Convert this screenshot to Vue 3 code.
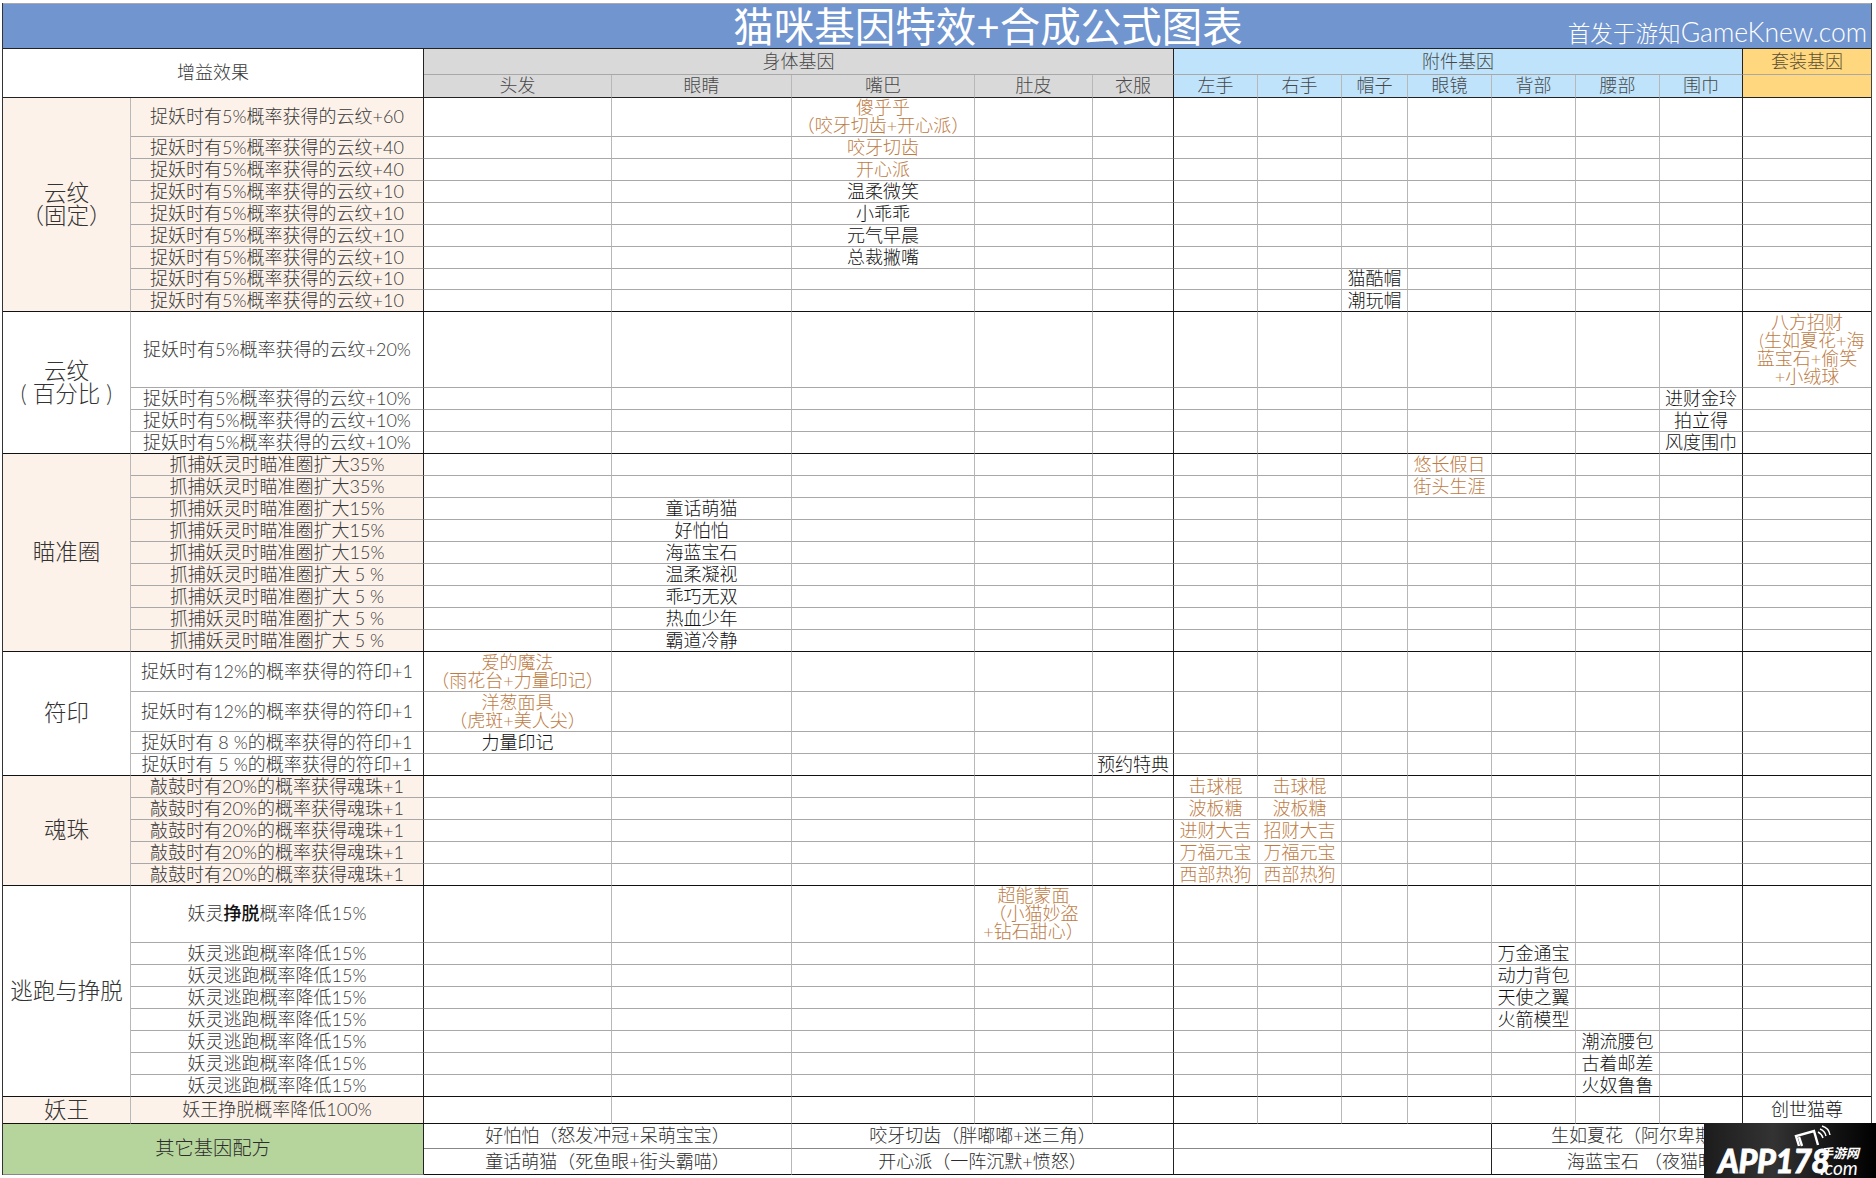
<template>
  <div class="page">
    <table class="sheet">
      <colgroup>
        <col v-for="(w, i) in colWidths" :key="i" :style="{ width: w + 'px' }" />
      </colgroup>
      <thead>
        <tr class="title-row">
          <th colspan="15" class="title-cell">
            <div class="title-inner">
              <span class="title">猫咪基因特效+合成公式图表</span>
              <span class="credit">首发于游知<span class="domain">GameKnew.com</span></span>
            </div>
          </th>
        </tr>
        <tr class="head-top">
          <th colspan="2" rowspan="2" class="buff-head">增益效果</th>
          <th colspan="5" class="body-gene dark-r">身体基因</th>
          <th colspan="7" class="part-gene dark-r">附件基因</th>
          <th class="suit-gene">套装基因</th>
        </tr>
        <tr class="head-sub">
          <th v-for="(c, i) in bodyCols" :key="c" class="body-gene" :class="{ 'dark-r': i === 4 }">{{ c }}</th>
          <th v-for="(c, i) in partCols" :key="c" class="part-gene" :class="{ 'dark-r': i === 6 }">{{ c }}</th>
          <th class="suit-gene"></th>
        </tr>
      </thead>
      <tbody>
        <template v-for="group in groups" :key="group.name">
          <tr v-for="(row, r) in group.rows" :key="r" :style="{ height: row.h + 'px' }">
            <td v-if="r === 0" :rowspan="group.rows.length" class="group-name end" :class="{ peach: group.peach }">{{ group.name }}</td>
            <td class="effect dark-r" :class="{ peach: group.peach, end: r === group.rows.length - 1 }">
              <template v-if="Array.isArray(row.effect)">{{ row.effect[0] }}<b>{{ row.effect[1] }}</b>{{ row.effect[2] }}</template>
              <template v-else>{{ row.effect }}</template>
            </td>
            <td
              v-for="(key, k) in colKeys"
              :key="key"
              class="gene"
              :class="{
                'dark-r': k === 4 || k === 11,
                end: r === group.rows.length - 1,
                orange: row.orange,
              }"
            >{{ row[key] }}</td>
          </tr>
        </template>
        <tr class="recipe-row first">
          <td colspan="2" rowspan="2" class="recipe-head">其它基因配方</td>
          <td colspan="2">好怕怕（怒发冲冠+呆萌宝宝）</td>
          <td colspan="3" class="dark-r">咬牙切齿（胖嘟嘟+迷三角）</td>
          <td colspan="4" class="dark-r"></td>
          <td colspan="4" class="cut-off first-off">生如夏花（阿尔卑斯</td>
        </tr>
        <tr class="recipe-row second">
          <td colspan="2">童话萌猫（死鱼眼+街头霸喵）</td>
          <td colspan="3" class="dark-r">开心派（一阵沉默+愤怒）</td>
          <td colspan="4" class="dark-r"></td>
          <td colspan="4" class="cut-off second-off">海蓝宝石 （夜猫眼</td>
        </tr>
      </tbody>
    </table>

    <div class="watermark">
      <svg class="wm-icon" viewBox="0 0 44 30" fill="none" stroke="#fff">
        <path d="M5 21 L2 11 L20 6 L24 20" stroke-width="2.4" />
        <path d="M5 12 L8 21" stroke-width="2.4" />
        <path d="M24 7 Q28 9 29 13" stroke-width="1.4" />
        <path d="M26 4 Q31 6 32 11" stroke-width="1.4" />
        <path d="M28 1 Q35 3 36 10" stroke-width="1.4" />
      </svg>
      <span class="wm-text">APP178</span>
      <span class="wm-side"><span class="wm-cn">手游网</span><span class="wm-com">.com</span></span>
    </div>
  </div>
</template>

<script setup>
const colWidths = [128, 293, 188, 180, 183, 118, 81, 84, 84, 66, 84, 84, 84, 83, 128]
const bodyCols = ['头发', '眼睛', '嘴巴', '肚皮', '衣服']
const partCols = ['左手', '右手', '帽子', '眼镜', '背部', '腰部', '围巾']
const colKeys = ['hair', 'eye', 'mouth', 'belly', 'clothes', 'left', 'right', 'hat', 'glasses', 'back', 'waist', 'scarf', 'suit']

const fixedCloud = '捉妖时有5%概率获得的云纹+'
const aim = '抓捕妖灵时瞄准圈扩大'
const charm = '敲鼓时有20%的概率获得魂珠+1'
const flee = '妖灵逃跑概率降低15%'

const groups = [
  {
    name: '云纹\n（固定）',
    peach: true,
    rows: [
      { h: 39, effect: fixedCloud + '60', mouth: '傻乎乎\n（咬牙切齿+开心派）', orange: true },
      { h: 22, effect: fixedCloud + '40', mouth: '咬牙切齿', orange: true },
      { h: 22, effect: fixedCloud + '40', mouth: '开心派', orange: true },
      { h: 22, effect: fixedCloud + '10', mouth: '温柔微笑' },
      { h: 22, effect: fixedCloud + '10', mouth: '小乖乖' },
      { h: 22, effect: fixedCloud + '10', mouth: '元气早晨' },
      { h: 22, effect: fixedCloud + '10', mouth: '总裁撇嘴' },
      { h: 21, effect: fixedCloud + '10', hat: '猫酷帽' },
      { h: 22, effect: fixedCloud + '10', hat: '潮玩帽' },
    ],
  },
  {
    name: '云纹\n( 百分比 )',
    rows: [
      { h: 76, effect: fixedCloud + '20%', suit: '八方招财\n\u00a0\u00a0(生如夏花+海\n蓝宝石+偷笑\n+小绒球', orange: true },
      { h: 22, effect: fixedCloud + '10%', scarf: '进财金玲' },
      { h: 22, effect: fixedCloud + '10%', scarf: '拍立得' },
      { h: 22, effect: fixedCloud + '10%', scarf: '风度围巾' },
    ],
  },
  {
    name: '瞄准圈',
    peach: true,
    rows: [
      { h: 22, effect: aim + '35%', glasses: '悠长假日', orange: true },
      { h: 22, effect: aim + '35%', glasses: '街头生涯', orange: true },
      { h: 22, effect: aim + '15%', eye: '童话萌猫' },
      { h: 22, effect: aim + '15%', eye: '好怕怕' },
      { h: 22, effect: aim + '15%', eye: '海蓝宝石' },
      { h: 22, effect: aim + ' 5 %', eye: '温柔凝视' },
      { h: 22, effect: aim + ' 5 %', eye: '乖巧无双' },
      { h: 22, effect: aim + ' 5 %', eye: '热血少年' },
      { h: 22, effect: aim + ' 5 %', eye: '霸道冷静' },
    ],
  },
  {
    name: '符印',
    rows: [
      { h: 40, effect: '捉妖时有12%的概率获得的符印+1', hair: '爱的魔法\n（雨花台+力量印记）', orange: true },
      { h: 40, effect: '捉妖时有12%的概率获得的符印+1', hair: '洋葱面具\n（虎斑+美人尖）', orange: true },
      { h: 22, effect: '捉妖时有 8 %的概率获得的符印+1', hair: '力量印记' },
      { h: 22, effect: '捉妖时有 5 %的概率获得的符印+1', clothes: '预约特典' },
    ],
  },
  {
    name: '魂珠',
    peach: true,
    rows: [
      { h: 22, effect: charm, left: '击球棍', right: '击球棍', orange: true },
      { h: 22, effect: charm, left: '波板糖', right: '波板糖', orange: true },
      { h: 22, effect: charm, left: '进财大吉', right: '招财大吉', orange: true },
      { h: 22, effect: charm, left: '万福元宝', right: '万福元宝', orange: true },
      { h: 22, effect: charm, left: '西部热狗', right: '西部热狗', orange: true },
    ],
  },
  {
    name: '逃跑与挣脱',
    rows: [
      { h: 57, effect: ['妖灵', '挣脱', '概率降低15%'], belly: '超能蒙面\n（小猫妙盗\n+钻石甜心）', orange: true },
      { h: 22, effect: flee, back: '万金通宝' },
      { h: 22, effect: flee, back: '动力背包' },
      { h: 22, effect: flee, back: '天使之翼' },
      { h: 22, effect: flee, back: '火箭模型' },
      { h: 22, effect: flee, waist: '潮流腰包' },
      { h: 22, effect: flee, waist: '古着邮差' },
      { h: 22, effect: flee, waist: '火奴鲁鲁' },
    ],
  },
  {
    name: '妖王',
    peach: true,
    rows: [{ h: 27, effect: '妖王挣脱概率降低100%', suit: '创世猫尊' }],
  },
]
</script>

<style>
html, body { background: #fff; }
</style>

<style scoped>
.page {
  position: relative;
  width: 1876px;
  height: 1178px;
  overflow: hidden;
  padding: 3px 0 0 2px;
  box-sizing: border-box;
  background: #fff;
  font-family: Lato, "Noto Sans CJK SC", sans-serif;
}
.sheet {
  width: 1870px;
  table-layout: fixed;
  border-collapse: separate;
  border-spacing: 0;
  border-left: 1px solid #333;
  border-right: 1px solid #444;
  font-size: 18px;
  font-weight: 300;
  line-height: 18px;
  color: #383838;
}
th, td {
  box-sizing: border-box;
  padding: 0 0 2px;
  text-align: center;
  font-weight: 300;
  white-space: pre-line;
  border-right: 1px solid #b8b8b8;
  border-bottom: 1px solid #a8a8a8;
}
.title-row { height: 46px; }
.title-cell {
  background: #7195cf;
  border-top: 1px solid #aaa;
  border-right: 0;
  border-bottom: 1px solid #222;
  padding: 0;
  color: #fff;
}
.title-inner {
  position: relative;
  display: flex;
  justify-content: center;
  align-items: center;
  height: 44px;
}
.title { font-size: 40.5px; line-height: 44px; margin: 2px 0 0 102px; font-weight: 400; }
.credit {
  position: absolute;
  right: 4px;
  top: 14px;
  font-size: 22.6px;
  line-height: 28px;
  white-space: nowrap;
}
.domain { font-size: 26.5px; }
.head-top { height: 26px; }
.head-sub { height: 23px; }
.head-sub th { border-bottom: 1px solid #222; }
.buff-head { background: #fff; border-bottom: 1px solid #222; border-right: 1px solid #222; }
.body-gene { background: #d9d9d9; color: #484848; }
.part-gene { background: #bee3fb; color: #484848; }
.suit-gene { background: #ffd77f; color: #5c5032; border-right: 0; }
.group-name { font-size: 22.5px; line-height: 23px; color: #333; }
.peach { background: #fdf2ea; }
.gene { color: #111; }
.gene.orange { color: #bd7c45; }
.dark-r { border-right: 1px solid #222; }
.end { border-bottom: 1px solid #111; }
.effect b { font-weight: 500; color: #111; }
.gene:last-child { border-right: 0; }
.recipe-row td { color: #2c2c2c; }
.recipe-row.first { height: 25px; }
.recipe-row.second { height: 26px; }
.recipe-row.first td { border-bottom: 1px solid #888; }
.recipe-row.second td, .recipe-row .recipe-head { border-bottom: 1px solid #111; }
.recipe-row .recipe-head { background: #b6d59c; border-right: 1px solid #222; font-size: 19.3px; }
.recipe-row .cut-off { border-right: 0; border-bottom-color: #111; text-align: left; white-space: pre; }
.first-off { padding-left: 59px; }
.second-off { padding-left: 75px; }
.watermark {
  position: absolute;
  left: 1704px;
  top: 1123px;
  width: 172px;
  height: 55px;
  background: linear-gradient(90deg, #1c1c1c, #333 40%, #141414 75%, #000);
  color: #fff;
}
.wm-icon { position: absolute; left: 90px; top: 2px; width: 44px; height: 30px; }
.wm-text {
  position: absolute;
  left: 14px;
  top: 20px;
  font: italic 900 32px/36px Lato, sans-serif;
  letter-spacing: -0.5px;
  white-space: nowrap;
  -webkit-text-stroke: 0.8px #fff;
}
.wm-side { position: absolute; left: 116px; top: 23px; display: flex; flex-direction: column; }
.wm-cn { font: italic 700 13px/14px "Noto Sans CJK SC", sans-serif; }
.wm-com { font: italic 400 19px/15px Lato, sans-serif; }
</style>
